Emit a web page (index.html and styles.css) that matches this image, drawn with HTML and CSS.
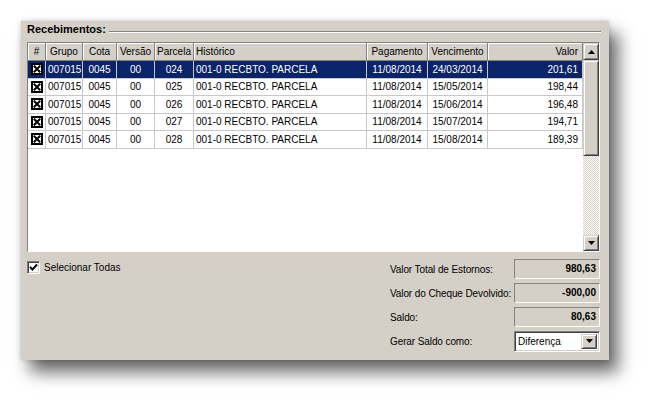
FILE: index.html
```html
<!DOCTYPE html>
<html lang="pt-BR">
<head>
    <meta charset="UTF-8">
    <title>Recebimentos</title>
    <link rel="stylesheet" href="styles.css">
</head>
<body>
    <div class="window">
        <div class="group-title">
            <span>Recebimentos:</span>
            <div class="etched"></div>
        </div>

        <div class="grid">
            <div class="grid-body">
                <table>
                    <colgroup>
                        <col style="width:18px">
                        <col style="width:37px">
                        <col style="width:34px">
                        <col style="width:38px">
                        <col style="width:39px">
                        <col style="width:173px">
                        <col style="width:61px">
                        <col style="width:60px">
                        <col style="width:95px">
                    </colgroup>
                    <thead>
                        <tr>
                            <th>#</th>
                            <th>Grupo</th>
                            <th>Cota</th>
                            <th>Versão</th>
                            <th>Parcela</th>
                            <th class="left">Histórico</th>
                            <th>Pagamento</th>
                            <th>Vencimento</th>
                            <th class="right">Valor</th>
                        </tr>
                    </thead>
                    <tbody>
                        <tr class="selected">
                            <td><svg class="ck" width="12" height="12" viewBox="0 0 12 12"><rect x="1" y="1" width="10" height="10" fill="#fff" stroke="#000" stroke-width="2"/><path d="M2.8 2.8L9.2 9.2M9.2 2.8L2.8 9.2" stroke="#000" stroke-width="2"/></svg></td>
                            <td>007015</td>
                            <td>0045</td>
                            <td>00</td>
                            <td>024</td>
                            <td class="left">001-0 RECBTO. PARCELA</td>
                            <td>11/08/2014</td>
                            <td>24/03/2014</td>
                            <td class="right">201,61</td>
                        </tr>
                        <tr>
                            <td><svg class="ck" width="12" height="12" viewBox="0 0 12 12"><rect x="1" y="1" width="10" height="10" fill="#fff" stroke="#000" stroke-width="2"/><path d="M2.8 2.8L9.2 9.2M9.2 2.8L2.8 9.2" stroke="#000" stroke-width="2"/></svg></td>
                            <td>007015</td>
                            <td>0045</td>
                            <td>00</td>
                            <td>025</td>
                            <td class="left">001-0 RECBTO. PARCELA</td>
                            <td>11/08/2014</td>
                            <td>15/05/2014</td>
                            <td class="right">198,44</td>
                        </tr>
                        <tr>
                            <td><svg class="ck" width="12" height="12" viewBox="0 0 12 12"><rect x="1" y="1" width="10" height="10" fill="#fff" stroke="#000" stroke-width="2"/><path d="M2.8 2.8L9.2 9.2M9.2 2.8L2.8 9.2" stroke="#000" stroke-width="2"/></svg></td>
                            <td>007015</td>
                            <td>0045</td>
                            <td>00</td>
                            <td>026</td>
                            <td class="left">001-0 RECBTO. PARCELA</td>
                            <td>11/08/2014</td>
                            <td>15/06/2014</td>
                            <td class="right">196,48</td>
                        </tr>
                        <tr>
                            <td><svg class="ck" width="12" height="12" viewBox="0 0 12 12"><rect x="1" y="1" width="10" height="10" fill="#fff" stroke="#000" stroke-width="2"/><path d="M2.8 2.8L9.2 9.2M9.2 2.8L2.8 9.2" stroke="#000" stroke-width="2"/></svg></td>
                            <td>007015</td>
                            <td>0045</td>
                            <td>00</td>
                            <td>027</td>
                            <td class="left">001-0 RECBTO. PARCELA</td>
                            <td>11/08/2014</td>
                            <td>15/07/2014</td>
                            <td class="right">194,71</td>
                        </tr>
                        <tr>
                            <td><svg class="ck" width="12" height="12" viewBox="0 0 12 12"><rect x="1" y="1" width="10" height="10" fill="#fff" stroke="#000" stroke-width="2"/><path d="M2.8 2.8L9.2 9.2M9.2 2.8L2.8 9.2" stroke="#000" stroke-width="2"/></svg></td>
                            <td>007015</td>
                            <td>0045</td>
                            <td>00</td>
                            <td>028</td>
                            <td class="left">001-0 RECBTO. PARCELA</td>
                            <td>11/08/2014</td>
                            <td>15/08/2014</td>
                            <td class="right">189,39</td>
                        </tr>
                    </tbody>
                </table>
            </div>

            <div class="vscroll">
                <div class="sb-btn sb-up">
                    <svg width="7" height="4" viewBox="0 0 7 4"><polygon points="3.5,0 7,4 0,4" fill="#000"/></svg>
                </div>
                <div class="sb-thumb"></div>
                <div class="sb-track"></div>
                <div class="sb-btn sb-down">
                    <svg width="7" height="4" viewBox="0 0 7 4"><polygon points="0,0 7,0 3.5,4" fill="#000"/></svg>
                </div>
            </div>
        </div>

        <div class="bottom">
            <label class="check-all">
                <span class="checkbox">
                    <svg width="9" height="9" viewBox="0 0 9 9"><polyline points="1,4 3.5,6.5 8,1.5" fill="none" stroke="#000" stroke-width="2"/></svg>
                </span>
                Selecionar Todas
            </label>

            <div class="totals">
                <span class="lbl">Valor Total de Estornos:</span>
                <div class="readonly">980,63</div>

                <span class="lbl">Valor do Cheque Devolvido:</span>
                <div class="readonly">-900,00</div>

                <span class="lbl">Saldo:</span>
                <div class="readonly">80,63</div>

                <span class="lbl">Gerar Saldo como:</span>
                <div class="combo">
                    <span class="combo-text">Diferença</span>
                    <span class="combo-btn">
                        <svg width="7" height="4" viewBox="0 0 7 4"><polygon points="0,0 7,0 3.5,4" fill="#000"/></svg>
                    </span>
                </div>
            </div>
        </div>
    </div>
</body>
</html>
```

FILE: styles.css
```css
html, body {
    min-height: 403px;
}

body {
    margin: 0;
    padding: 21px 0 0 21px;
    box-sizing: border-box;
    background: #fff;
    font-family: "Liberation Sans", Arial, sans-serif;
    font-size: 10px;
    color: #000;
}

.window {
    width: 588px;
    height: 339px;
    box-sizing: border-box;
    padding: 2px 9px 0 6px;
    background: #d4d0c8;
    box-shadow: 9px 12px 16px rgba(0, 0, 0, 0.6), 0 0 5px rgba(0, 0, 0, 0.18);
}

/* group box caption */
.group-title {
    display: flex;
    align-items: flex-start;
    height: 13px;
    line-height: 13px;
    font-size: 11px;
    font-weight: bold;
}

.etched {
    flex: 1;
    margin: 8px -1px 0 3px;
    border-top: 1px solid #808080;
    border-bottom: 1px solid #fff;
}

/* data grid */
.grid {
    display: flex;
    height: 210px;
    box-sizing: border-box;
    margin-top: 6px;
    border: 1px solid;
    border-color: #808080 #fff #fff #808080;
    background: #fff;
}

.grid-body {
    width: 555px;
    overflow: hidden;
}

table {
    width: 555px;
    table-layout: fixed;
    border-collapse: separate;
    border-spacing: 0;
}

th, td {
    padding: 0 2px;
    text-align: center;
    white-space: nowrap;
    overflow: hidden;
    font-weight: normal;
}

thead tr {
    height: 18px;
}

th {
    background: #d4d0c8;
    border-right: 1px solid #808080;
    border-bottom: 1px solid #808080;
    box-shadow: inset 1px 1px #fff;
}

tbody tr {
    height: 17.5px;
}

td {
    border-right: 1px solid #c8c8c8;
    border-bottom: 1px solid #c8c8c8;
}

th.left, td.left {
    text-align: left;
}

th.right, td.right {
    text-align: right;
    padding-right: 4px;
}

tr.selected td {
    background: #0a246a;
    color: #fff;
}

.ck {
    display: block;
    margin: 0 auto;
}

/* scrollbar */
.vscroll {
    width: 16px;
    display: flex;
    flex-direction: column;
}

.sb-btn, .sb-thumb, .combo-btn {
    box-sizing: border-box;
    background: #d4d0c8;
    border: 1px solid;
    border-color: #d4d0c8 #404040 #404040 #d4d0c8;
    box-shadow: inset 1px 1px #fff, inset -1px -1px #808080;
}

.sb-btn {
    display: flex;
    align-items: center;
    justify-content: center;
}

.sb-up {
    height: 17px;
}

.sb-down {
    height: 16px;
}

.sb-thumb {
    height: 96px;
}

.sb-track {
    flex: 1;
    background: repeating-conic-gradient(#d4d0c8 0 25%, #fff 0 50%) 0 0 / 2px 2px;
}

/* lower area */
.bottom {
    display: flex;
    justify-content: space-between;
    align-items: flex-start;
    margin-top: 7px;
}

.check-all {
    display: flex;
    align-items: center;
    gap: 4px;
    margin-top: 2px;
}

.checkbox {
    width: 13px;
    height: 13px;
    box-sizing: border-box;
    display: flex;
    align-items: center;
    justify-content: center;
    background: #fff;
    border: 1px solid;
    border-color: #808080 #fff #fff #808080;
    box-shadow: inset 1px 1px #404040, inset -1px -1px #d4d0c8;
}

.totals {
    display: grid;
    grid-template-columns: 124px 86px;
    grid-auto-rows: 20px;
    row-gap: 4px;
    align-items: center;
}

.lbl {
    white-space: nowrap;
    letter-spacing: -0.1px;
}

.readonly {
    height: 20px;
    box-sizing: border-box;
    line-height: 18px;
    padding-right: 3px;
    text-align: right;
    font-weight: bold;
    border: 1px solid;
    border-color: #808080 #fff #fff #808080;
}

.combo {
    display: flex;
    align-items: center;
    height: 21px;
    box-sizing: border-box;
    padding: 2px;
    background: #fff;
    border: 1px solid;
    border-color: #808080 #fff #fff #808080;
    box-shadow: inset 1px 1px #404040, inset -1px -1px #d4d0c8;
}

.combo-text {
    flex: 1;
    padding-left: 1px;
}

.combo-btn {
    width: 16px;
    height: 15px;
    display: flex;
    align-items: center;
    justify-content: center;
}
```
